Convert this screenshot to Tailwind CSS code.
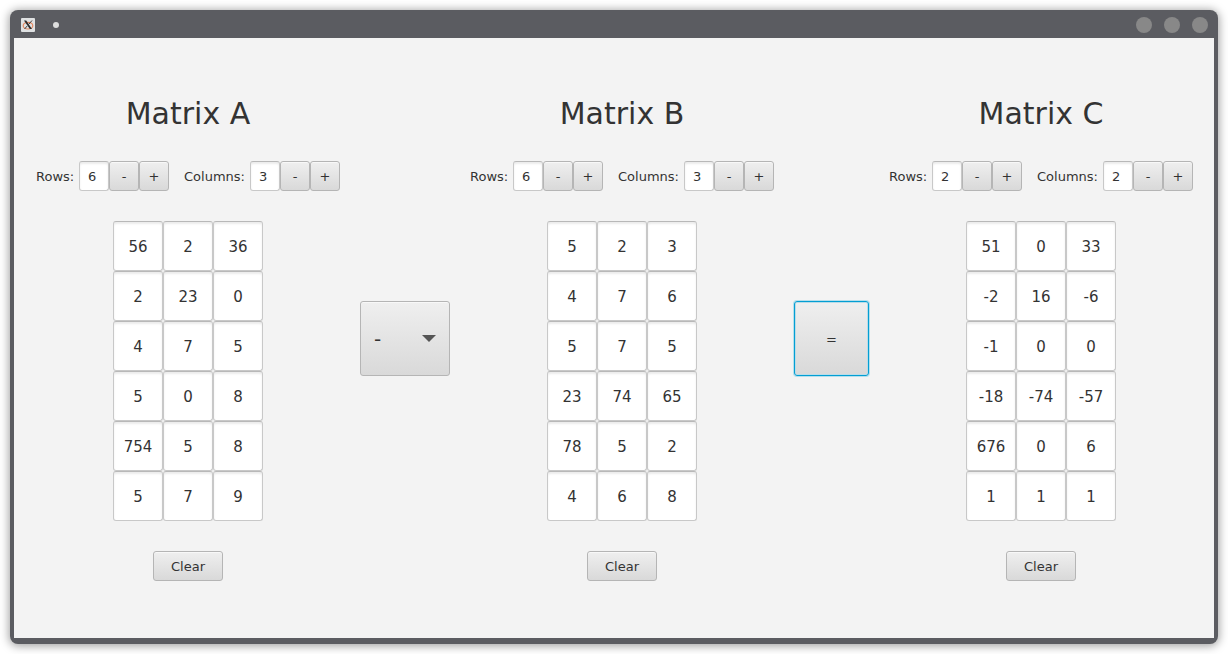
<!DOCTYPE html>
<html lang="en">
<head>
<meta charset="utf-8">
<title>Matrix Calculator</title>
<script src="https://cdn.jsdelivr.net/npm/@tailwindcss/browser@4"></script>
</head>
<body class="bg-white font-['DejaVu_Sans',sans-serif] text-[13px] text-[#333333]">
<div class="flex min-h-screen px-2.5 py-2.5">
  <div class="flex flex-1 flex-col rounded-lg bg-[#5b5c61] px-1 pb-1.5 shadow-[0_1px_10px_1px_rgba(0,0,0,0.38)]">
    <header class="flex h-7 items-center justify-between pr-1.5 pl-[7px] pt-0.5">
      <div class="flex items-center gap-[18px]">
        <svg class="size-3.5" viewBox="0 0 14 14" aria-hidden="true">
          <rect width="14" height="14" rx="1" fill="#dfe1e2"/>
          <ellipse cx="7" cy="7.700" rx="4.800" ry="3.300" fill="none" stroke="#e58a62" stroke-width="1.200"/>
          <path d="M3 2.500h2.200l5.800 8.500H8.800z" fill="#2b2b2b"/>
          <path d="M11 2.500 7.800 6.200M6.200 8 3.500 11" stroke="#2b2b2b" stroke-width="0.900"/>
        </svg>
        <span class="size-1.5 rounded-full bg-[#dedede]"></span>
      </div>
      <div class="flex gap-3">
        <button type="button" aria-label="Minimize" class="size-4 rounded-full bg-[#888888]"></button>
        <button type="button" aria-label="Maximize" class="size-4 rounded-full bg-[#888888]"></button>
        <button type="button" aria-label="Close" class="size-4 rounded-full bg-[#888888]"></button>
      </div>
    </header>
    <main class="flex flex-1 items-center justify-center gap-5 bg-[#f3f3f3] pl-px">
      <section data-matrix="A" class="flex w-[304px] flex-col items-center gap-[30px]"></section>
      <div class="relative">
        <select aria-label="Operation" class="h-[75px] w-[90px] appearance-none rounded-[3px] border border-[#b5b5b5] bg-linear-to-b from-[#efefef] to-[#d9d9d9] pt-0.5 pl-[13px] text-xl shadow-[inset_0_1px_0_#f8f8f8]">
          <option>-</option>
          <option>+</option>
          <option>*</option>
        </select>
        <svg class="pointer-events-none absolute top-[34px] right-3.5 h-[7px] w-3.5" viewBox="0 0 14 7" aria-hidden="true"><path d="M0 0h14L7 7z" fill="#555555"/></svg>
      </div>
      <section data-matrix="B" class="flex w-[304px] flex-col items-center gap-[30px]"></section>
      <button type="button" class="size-[75px] rounded-[3px] border border-[#039ed3] bg-linear-to-b from-[#efefef] to-[#d9d9d9] pt-1 shadow-[0_0_0_1px_#b5dfec,inset_0_0_0_1px_#b9dce8]">=</button>
      <section data-matrix="C" class="flex w-[304px] flex-col items-center gap-[30px]"></section>
    </main>
  </div>
</div>
<script>
const matrices = {
  A: { rows: 6, cols: 3, cells: [[56, 2, 36], [2, 23, 0], [4, 7, 5], [5, 0, 8], [754, 5, 8], [5, 7, 9]] },
  B: { rows: 6, cols: 3, cells: [[5, 2, 3], [4, 7, 6], [5, 7, 5], [23, 74, 65], [78, 5, 2], [4, 6, 8]] },
  C: { rows: 2, cols: 2, cells: [[51, 0, 33], [-2, 16, -6], [-1, 0, 0], [-18, -74, -57], [676, 0, 6], [1, 1, 1]] }
};
const buttonFace = 'rounded-[3px] border border-[#b5b5b5] bg-linear-to-b from-[#efefef] to-[#d9d9d9] pt-0.5 shadow-[inset_0_1px_0_#f8f8f8]';
const field = 'rounded-[3px] border border-[#c8c8c8] border-t-[#b8b8b8] bg-white pt-0.5 shadow-[inset_0_2px_2px_#ececec]';

function counter(id, label, value, labelWidth) {
  return `<div class="flex items-center">
    <label for="${id}" class="mr-[5px] pt-0.5 whitespace-nowrap ${labelWidth}">${label}:</label>
    <input id="${id}" value="${value}" class="size-[30px] pl-2 ${field}">
    <button type="button" aria-label="Fewer ${label}" class="size-[30px] ${buttonFace}">-</button>
    <button type="button" aria-label="More ${label}" class="size-[30px] ${buttonFace}">+</button>
  </div>`;
}

for (const section of document.querySelectorAll('[data-matrix]')) {
  const name = section.dataset.matrix;
  const { rows, cols, cells } = matrices[name];
  const inputs = cells.flatMap((row, r) => row.map((value, c) =>
    `<input value="${value}" aria-label="Matrix ${name} row ${r + 1} column ${c + 1}" class="size-[50px] text-center text-[15px] ${field}">`)).join('');
  section.innerHTML = `
    <h2 class="text-[30px] leading-[35px]">Matrix ${name}</h2>
    <div class="flex gap-[15px]">${counter('rows' + name, 'Rows', rows, 'w-[38px]')}${counter('cols' + name, 'Columns', cols, 'w-[61px]')}</div>
    <div class="grid grid-cols-3">${inputs}</div>
    <button type="button" class="h-[30px] w-[70px] ${buttonFace}">Clear</button>`;
}
</script>
</body>
</html>
